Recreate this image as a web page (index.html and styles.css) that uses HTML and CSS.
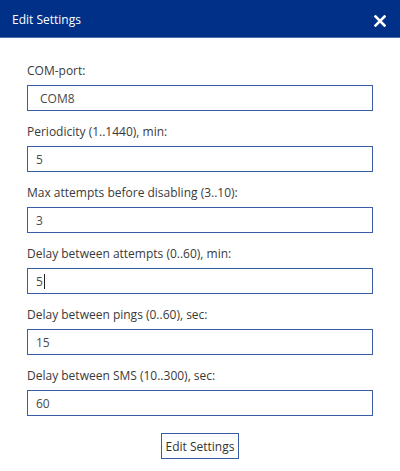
FILE: index.html
```html
<!DOCTYPE html>
<html>
<head>
<meta charset="utf-8">
<link rel="stylesheet" href="styles.css">
</head>
<body>
<div class="dialog">
  <div class="header">
    <span class="title">Edit Settings</span>
    <span class="close" aria-label="Close">
      <svg width="12" height="12" viewBox="0 0 12 12"><path d="M1.5 1.5 L10.5 10.5 M10.5 1.5 L1.5 10.5" stroke="#fff" stroke-width="2.6" stroke-linecap="square"/></svg>
    </span>
  </div>
  <form class="body">
    <div class="field">
      <label class="label">COM-port:</label>
      <div class="input select">COM8</div>
    </div>
    <div class="field">
      <label class="label">Periodicity (1..1440), min:</label>
      <div class="input">5</div>
    </div>
    <div class="field">
      <label class="label">Max attempts before disabling (3..10):</label>
      <div class="input">3</div>
    </div>
    <div class="field">
      <label class="label">Delay between attempts (0..60), min:</label>
      <div class="input">5<span class="caret"></span></div>
    </div>
    <div class="field">
      <label class="label">Delay between pings (0..60), sec:</label>
      <div class="input">15</div>
    </div>
    <div class="field">
      <label class="label">Delay between SMS (10..300), sec:</label>
      <div class="input">60</div>
    </div>
    <div class="actions">
      <button type="button" class="btn">Edit Settings</button>
    </div>
  </form>
</div>
</body>
</html>
```
FILE: styles.css
```css
html, body {
  margin: 0;
  padding: 0;
  background: #ffffff;
}
body {
  font-family: "Open Sans", "Noto Sans", "Liberation Sans", sans-serif;
  font-size: 12px;
  color: #333333;
}
.header {
  height: 38px;
  box-sizing: border-box;
  background: #003087;
  border-bottom: 1px solid #4a6db0;
  display: flex;
  align-items: center;
  justify-content: space-between;
  padding: 2px 14px 0 12px;
}
.title {
  color: #ffffff;
  font-size: 12px;
}
.close {
  display: flex;
  align-items: center;
  margin-top: 3px;
}
.body {
  display: flex;
  flex-direction: column;
  gap: 12px;
  padding: 24px 27px 0 27px;
  margin: 0;
}
.field {
  display: flex;
  flex-direction: column;
  gap: 5px;
}
.label {
  line-height: 18px;
  height: 18px;
  color: #3a3a3a;
}
.input {
  height: 26px;
  box-sizing: border-box;
  border: 1px solid #3a5ca6;
  padding: 0 8px;
  display: flex;
  align-items: center;
  color: #4a4a4a;
  background: #ffffff;
}
.input.select {
  padding-left: 12px;
}
.caret {
  display: inline-block;
  width: 1px;
  height: 15px;
  background: #222222;
  margin-left: 1px;
}
.actions {
  display: flex;
  justify-content: center;
  padding-top: 5px;
}
.btn {
  width: 78px;
  height: 26px;
  box-sizing: border-box;
  border: 1px solid #3a5ca6;
  background: #ffffff;
  font-family: inherit;
  font-size: 12px;
  color: #333333;
  padding: 0;
  cursor: pointer;
}
```
